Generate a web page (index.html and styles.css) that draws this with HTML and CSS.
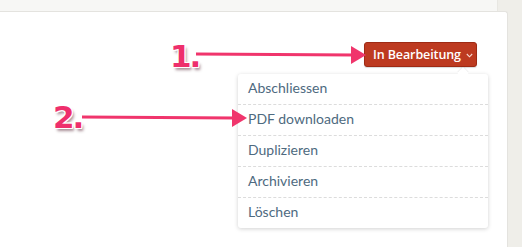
FILE: index.html
```html
<!DOCTYPE html>
<html>
<head>
<meta charset="utf-8">
<link rel="stylesheet" href="styles.css">
</head>
<body>
<div class="page">
  <div class="main">
    <div class="topbar"></div>
    <div class="card">
      <div class="toolbar">
        <div class="status">
          <button class="status-btn"><span class="label">In Bearbeitung</span><svg class="chev" width="7" height="5" viewBox="0 0 7 5"><path d="M0.8 1 L3.5 3.8 L6.2 1" fill="none" stroke="#f6d9d2" stroke-width="1.1"/></svg></button>
          <ul class="menu">
            <li>Abschliessen</li>
            <li>PDF downloaden</li>
            <li>Duplizieren</li>
            <li>Archivieren</li>
            <li>Löschen</li>
          </ul>
        </div>
      </div>
    </div>
  </div>
  <div class="side"></div>

  <span class="step step-1">1.</span>
  <span class="step step-2">2.</span>
  <svg class="arrows" width="522" height="247" viewBox="0 0 522 247">
    <line x1="196" y1="54" x2="354" y2="55" stroke="#f0356c" stroke-width="3"/>
    <polygon points="351,46 366,55 351,64" fill="#f0356c"/>
    <line x1="82" y1="117" x2="235" y2="118" stroke="#f0356c" stroke-width="3"/>
    <polygon points="232,109 247,118 232,127" fill="#f0356c"/>
  </svg>
</div>
</body>
</html>
```
FILE: styles.css
```css
html, body {
  margin: 0;
  padding: 0;
}
body {
  background: #efeee9;
  font-family: "Lato", "Open Sans", sans-serif;
  width: 522px;
  height: 247px;
  overflow: hidden;
}
.page {
  position: relative;
  display: flex;
  width: 522px;
  height: 247px;
}
.main {
  width: 508px;
  display: flex;
  flex-direction: column;
}
.topbar {
  height: 11px;
  width: 497px;
  background: #f7f7f5;
  border-right: 1px solid #e8e7e2;
}
.card {
  flex: 1;
  background: #fff;
  border: 1px solid #e4e3df;
  border-left: none;
  border-bottom: none;
  border-radius: 0 3px 0 0;
}
.toolbar {
  display: flex;
  justify-content: flex-end;
  padding: 30px 30px 0 0;
}
.status {
  position: relative;
}
.status-btn {
  display: flex;
  align-items: center;
  gap: 5px;
  height: 25px;
  width: 113px;
  padding: 0 0 0 8px;
  background: #bd3a20;
  border: 1px solid #9e2a14;
  border-radius: 3px;
  color: #fff;
  font-family: "Open Sans", sans-serif;
  font-weight: 600;
  font-size: 12.5px;
  white-space: nowrap;
  box-shadow: 0 1px 1px rgba(0,0,0,.15);
}
.label {
  letter-spacing: -0.1px;
}
.chev {
  flex: none;
  margin-top: 1px;
}
.menu {
  position: absolute;
  top: 32px;
  right: -11px;
  width: 250px;
  margin: 0;
  padding: 0;
  list-style: none;
  background: #fff;
  border-radius: 3px;
  box-shadow: 0 1px 4px rgba(0,0,0,.18);
}
.menu::before {
  content: "";
  position: absolute;
  top: -5px;
  right: 21px;
  width: 8px;
  height: 8px;
  background: #fff;
  transform: rotate(45deg);
  box-shadow: -1px -1px 1px rgba(0,0,0,.06);
}
.menu li {
  position: relative;
  height: 30px;
  line-height: 28px;
  padding-left: 10px;
  font-size: 14px;
  color: #4e6a80;
  border-bottom: 1px dashed #dcdcdc;
}
.menu li:last-child {
  border-bottom: none;
}
.side {
  flex: 1;
}
.step {
  position: absolute;
  font-family: "DejaVu Sans", sans-serif;
  font-weight: 700;
  font-size: 31px;
  line-height: 1;
  letter-spacing: -2px;
  color: #ee2f6c;
  text-shadow:
    1px 0 0 #fff, -1px 0 0 #fff, 0 1px 0 #fff, 0 -1px 0 #fff,
    1px 1px 0 #fff, -1px -1px 0 #fff, 1px -1px 0 #fff, -1px 1px 0 #fff,
    2px 3px 3px rgba(60,0,20,.45);
}
.step-1 {
  left: 170px;
  top: 41px;
}
.step-2 {
  left: 53px;
  top: 102px;
}
.arrows {
  position: absolute;
  left: 0;
  top: 0;
  pointer-events: none;
}
```
